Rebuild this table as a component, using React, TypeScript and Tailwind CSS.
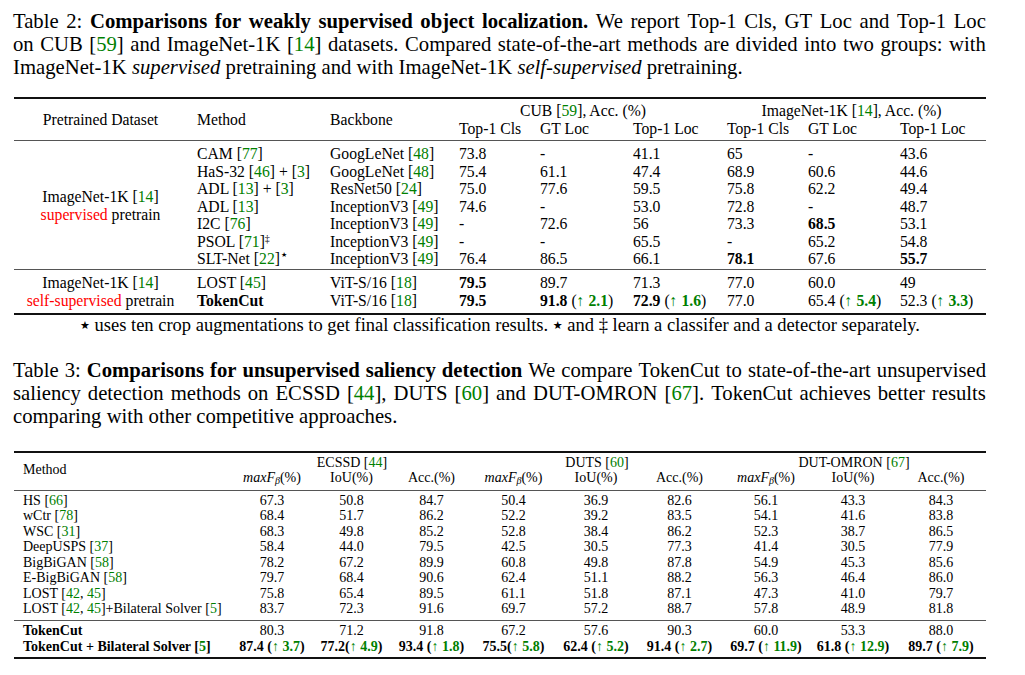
import React from 'react';

type N = React.ReactNode;

const G = ({ children }: { children: N }) => <span className="text-[#008000]">{children}</span>;
const Cite = ({ n, after = '' }: { n: string; after?: string }) => (
  <>
    [<G>{n}</G>]{after}
  </>
);

function words(s: string, cls = ''): N[] {
  return s.split(' ').map((w) => (cls ? <span className={cls}>{w}</span> : w));
}

const JL = ({ t }: { t: N[] }) => (
  <div className="flex justify-between whitespace-nowrap">
    {t.map((x, i) => (
      <span key={i}>{x}</span>
    ))}
  </div>
);

const Up = ({ v }: { v: string }) => (
  <>
    (<G>↑ <b>{v}</b></G>)
  </>
);

const Star = ({ cls = 'text-[11px]' }: { cls?: string }) => (
  <span className={`${cls} font-['DejaVu_Sans',sans-serif] relative top-[-2px]`}>★</span>
);

const IncV3 = (
  <>
    InceptionV3 <Cite n="49" />
  </>
);
const Vit = (
  <>
    ViT-S/16 <Cite n="18" />
  </>
);

type Row2 = { m: N; b: N; v: N[] };

const rows2a: Row2[] = [
  { m: <>CAM <Cite n="77" /></>, b: <>GoogLeNet <Cite n="48" /></>, v: ['73.8', '-', '41.1', '65', '-', '43.6'] },
  { m: <>HaS-32 <Cite n="46" /> + <Cite n="3" /></>, b: <>GoogLeNet <Cite n="48" /></>, v: ['75.4', '61.1', '47.4', '68.9', '60.6', '44.6'] },
  { m: <>ADL <Cite n="13" /> + <Cite n="3" /></>, b: <>ResNet50 <Cite n="24" /></>, v: ['75.0', '77.6', '59.5', '75.8', '62.2', '49.4'] },
  { m: <>ADL <Cite n="13" /></>, b: IncV3, v: ['74.6', '-', '53.0', '72.8', '-', '48.7'] },
  { m: <>I2C <Cite n="76" /></>, b: IncV3, v: ['-', '72.6', '56', '73.3', <b>68.5</b>, '53.1'] },
  { m: <>PSOL <Cite n="71" /><sup className="text-[10px]">‡</sup></>, b: IncV3, v: ['-', '-', '65.5', '-', '65.2', '54.8'] },
  {
    m: (
      <>
        SLT-Net <Cite n="22" />
        <span className="text-[7px] font-['DejaVu_Sans',sans-serif] relative top-[-7px] ml-[1px]">★</span>
      </>
    ),
    b: IncV3,
    v: ['76.4', '86.5', '66.1', <b>78.1</b>, '67.6', <b>55.7</b>],
  },
];

const rows2b: Row2[] = [
  { m: <>LOST <Cite n="45" /></>, b: Vit, v: [<b>79.5</b>, '89.7', '71.3', '77.0', '60.0', '49'] },
  {
    m: <b>TokenCut</b>,
    b: Vit,
    v: [
      <b>79.5</b>,
      <><b>91.8</b> <Up v="2.1" /></>,
      <><b>72.9</b> <Up v="1.6" /></>,
      '77.0',
      <>65.4 <Up v="5.4" /></>,
      <>52.3 <Up v="3.3" /></>,
    ],
  },
];

const R2 = ({ r }: { r: Row2 }) => (
  <div className="grid grid-cols-[133px_129px_81px_93px_94px_81px_92px_96px] h-[17.5px] leading-[17.5px] whitespace-nowrap">
    <div className="pl-[10px]">{r.m}</div>
    <div className="pl-[10px]">{r.b}</div>
    {r.v.map((x, i) => (
      <div key={i} className="pl-[10px]">
        {x}
      </div>
    ))}
  </div>
);

const Heavy = () => <div className="h-[2px] bg-[#111]" />;
const Mid = () => <div className="h-px bg-[#555]" />;

type Row3 = { m: N; v: N[] };

const rows3a: Row3[] = [
  { m: <>HS <Cite n="66" /></>, v: ['67.3', '50.8', '84.7', '50.4', '36.9', '82.6', '56.1', '43.3', '84.3'] },
  { m: <>wCtr <Cite n="78" /></>, v: ['68.4', '51.7', '86.2', '52.2', '39.2', '83.5', '54.1', '41.6', '83.8'] },
  { m: <>WSC <Cite n="31" /></>, v: ['68.3', '49.8', '85.2', '52.8', '38.4', '86.2', '52.3', '38.7', '86.5'] },
  { m: <>DeepUSPS <Cite n="37" /></>, v: ['58.4', '44.0', '79.5', '42.5', '30.5', '77.3', '41.4', '30.5', '77.9'] },
  { m: <>BigBiGAN <Cite n="58" /></>, v: ['78.2', '67.2', '89.9', '60.8', '49.8', '87.8', '54.9', '45.3', '85.6'] },
  { m: <>E-BigBiGAN <Cite n="58" /></>, v: ['79.7', '68.4', '90.6', '62.4', '51.1', '88.2', '56.3', '46.4', '86.0'] },
  { m: <>LOST [<G>42</G>, <G>45</G>]</>, v: ['75.8', '65.4', '89.5', '61.1', '51.8', '87.1', '47.3', '41.0', '79.7'] },
  { m: <>LOST [<G>42</G>, <G>45</G>]+Bilateral Solver <Cite n="5" /></>, v: ['83.7', '72.3', '91.6', '69.7', '57.2', '88.7', '57.8', '48.9', '81.8'] },
];

const U3 = ({ a, d, sp = true }: { a: string; d: string; sp?: boolean }) => (
  <b>
    {a}
    {sp ? ' ' : ''}(<G><span className="font-normal">↑</span> {d}</G>)
  </b>
);

const rows3b: { m: N; v: N[]; h: string }[] = [
  { m: <b>TokenCut</b>, v: ['80.3', '71.2', '91.8', '67.2', '57.6', '90.3', '60.0', '53.3', '88.0'], h: 'h-[15.5px]' },
  {
    m: <b>TokenCut + Bilateral Solver <Cite n="5" /></b>,
    v: [
      <U3 a="87.4" d="3.7" />,
      <U3 a="77.2" d="4.9" sp={false} />,
      <U3 a="93.4" d="1.8" />,
      <U3 a="75.5" d="5.8" sp={false} />,
      <U3 a="62.4" d="5.2" />,
      <U3 a="91.4" d="2.7" />,
      <U3 a="69.7" d="11.9" />,
      <U3 a="61.8" d="12.9" />,
      <U3 a="89.7" d="7.9" />,
    ],
    h: 'h-[16.5px]',
  },
];

const cols3 = 'grid grid-cols-[218px_80px_79px_81px_83px_82px_85px_88px_86px_90px]';

const R3 = ({ m, v, h = 'h-[15.5px]' }: { m: N; v: N[]; h?: string }) => (
  <div className={`${cols3} ${h} items-center leading-[15.5px] whitespace-nowrap`}>
    <div className="pl-[9px]">{m}</div>
    {v.map((x, i) => (
      <div key={i} className="text-center">
        {x}
      </div>
    ))}
  </div>
);

const MaxF = () => (
  <>
    <span className="italic">maxF</span>
    <sub className="italic text-[10px]">β</sub>(%)
  </>
);

export default function App() {
  return (
    <div className="w-[1025px] h-[675px] bg-white text-black overflow-hidden font-['Liberation_Serif',serif]">
      <div className="ml-[13px] w-[973px] pt-[10px]">
        {/* Table 2 caption */}
        <div className="text-[20.7px] leading-[23px]">
          <JL
            t={[
              ...words('Table 2:'),
              ...words('Comparisons for weakly supervised object localization.', 'font-bold'),
              ...words('We report Top-1 Cls, GT Loc and Top-1 Loc'),
            ]}
          />
          <JL
            t={[
              'on',
              'CUB',
              <Cite n="59" />,
              'and',
              'ImageNet-1K',
              <Cite n="14" />,
              ...words('datasets. Compared state-of-the-art methods are divided into two groups: with'),
            ]}
          />
          <div className="whitespace-nowrap">
            ImageNet-1K <i>supervised</i> pretraining and with ImageNet-1K <i>self-supervised</i> pretraining.
          </div>
        </div>

        {/* Table 2 */}
        <div className="ml-px w-[972px] mt-[18px] text-[15.7px]">
          <Heavy />
          <div className="pt-[3px] pb-[3px] flex">
            <div className="w-[173px] flex items-center justify-center leading-[17.5px]">Pretrained Dataset</div>
            <div className="w-[133px] pl-[10px] flex items-center">Method</div>
            <div className="w-[129px] pl-[10px] flex items-center">Backbone</div>
            <div className="flex flex-col leading-[17.5px]">
              <div className="flex h-[17.5px]">
                <div className="w-[268px] text-center">
                  CUB <Cite n="59" />, Acc. (%)
                </div>
                <div className="w-[269px] text-center">
                  ImageNet-1K <Cite n="14" />, Acc. (%)
                </div>
              </div>
              <div className="grid grid-cols-[81px_93px_94px_81px_92px_96px] h-[17.5px] whitespace-nowrap">
                <div className="pl-[10px]">Top-1 Cls</div>
                <div className="pl-[10px]">GT Loc</div>
                <div className="pl-[10px]">Top-1 Loc</div>
                <div className="pl-[10px]">Top-1 Cls</div>
                <div className="pl-[10px]">GT Loc</div>
                <div className="pl-[10px]">Top-1 Loc</div>
              </div>
            </div>
          </div>
          <Mid />
          <div className="pt-[4px] pb-[1.5px] flex">
            <div className="w-[173px] flex flex-col items-center justify-center leading-[18px]">
              <div>
                ImageNet-1K <Cite n="14" />
              </div>
              <div>
                <span className="text-[#ff0000]">supervised</span> pretrain
              </div>
            </div>
            <div>
              {rows2a.map((r, i) => (
                <R2 key={i} r={r} />
              ))}
            </div>
          </div>
          <Mid />
          <div className="pt-[4px] pb-[4px] flex">
            <div className="w-[173px] flex flex-col items-center justify-center leading-[17.5px] whitespace-nowrap">
              <div>
                ImageNet-1K <Cite n="14" />
              </div>
              <div>
                <span className="text-[#ff0000]">self-supervised</span> pretrain
              </div>
            </div>
            <div>
              {rows2b.map((r, i) => (
                <R2 key={i} r={r} />
              ))}
            </div>
          </div>
          <Heavy />
          <div className="h-[20px] leading-[20px] text-center text-[18.5px] whitespace-nowrap">
            <Star /> uses ten crop augmentations to get final classification results. <Star /> and ‡ learn a classifer and
            a detector separately.
          </div>
        </div>

        {/* Table 3 caption */}
        <div className="mt-[23.5px] text-[20.7px] leading-[23px]">
          <JL
            t={[
              ...words('Table 3:'),
              ...words('Comparisons for unsupervised saliency detection', 'font-bold'),
              ...words('We compare TokenCut to state-of-the-art unsupervised'),
            ]}
          />
          <JL
            t={[
              ...words('saliency detection methods on ECSSD'),
              <Cite n="44" after="," />,
              'DUTS',
              <Cite n="60" />,
              'and',
              'DUT-OMRON',
              <Cite n="67" after="." />,
              ...words('TokenCut achieves better results'),
            ]}
          />
          <div className="whitespace-nowrap">comparing with other competitive approaches.</div>
        </div>

        {/* Table 3 */}
        <div className="ml-px w-[972px] mt-[23.5px] text-[14px]">
          <Heavy />
          <div className="pt-[1.5px] pb-[5.5px] flex leading-[15px] whitespace-nowrap">
            <div className="w-[218px] pl-[9px] flex items-center">Method</div>
            <div className="flex flex-col">
              <div className="flex h-[15px]">
                <div className="w-[240px] text-center">
                  ECSSD <Cite n="44" />
                </div>
                <div className="w-[250px] text-center">
                  DUTS <Cite n="60" />
                </div>
                <div className="w-[264px] text-center">
                  DUT-OMRON <Cite n="67" />
                </div>
              </div>
              <div className="grid grid-cols-[80px_79px_81px_83px_82px_85px_88px_86px_90px] h-[15px]">
                <div className="text-center"><MaxF /></div>
                <div className="text-center">IoU(%)</div>
                <div className="text-center">Acc.(%)</div>
                <div className="text-center"><MaxF /></div>
                <div className="text-center">IoU(%)</div>
                <div className="text-center">Acc.(%)</div>
                <div className="text-center"><MaxF /></div>
                <div className="text-center">IoU(%)</div>
                <div className="text-center">Acc.(%)</div>
              </div>
            </div>
          </div>
          <Mid />
          <div className="pt-[1.5px] pb-[3.5px]">
            {rows3a.map((r, i) => (
              <R3 key={i} m={r.m} v={r.v} />
            ))}
          </div>
          <Mid />
          <div className="pt-[1.5px] pb-[2.5px]">
            {rows3b.map((r, i) => (
              <R3 key={i} m={r.m} v={r.v} h={r.h} />
            ))}
          </div>
          <Heavy />
        </div>
      </div>
    </div>
  );
}
